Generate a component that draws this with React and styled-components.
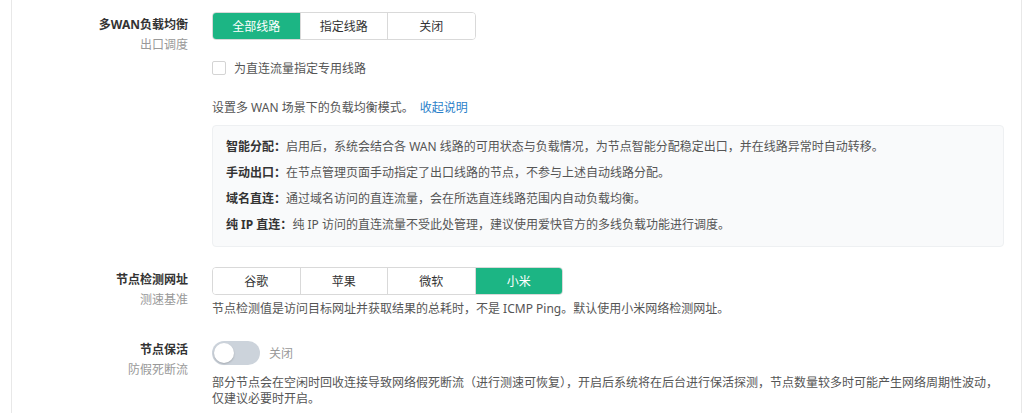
import styled, { createGlobalStyle } from 'styled-components';

const GlobalStyle = createGlobalStyle`
  html, body {
    margin: 0;
    background: #fff;
    font-family: "Noto Sans", "Noto Sans CJK SC", sans-serif;
    font-size: 12px;
    color: #333;
  }
`;

const Card = styled.div`
  margin-left: 11px;
  width: 1009px;
  min-height: 413px;
  border-left: 1px solid #e8e8e8;
  border-right: 1px solid #e8e8e8;
  padding-top: 12px;
  display: flex;
  flex-direction: column;
  gap: 20px;
`;

const Row = styled.div`
  display: grid;
  grid-template-columns: 176px 796px;
  column-gap: 24px;
`;

const Label = styled.div`
  text-align: right;
  padding-top: ${(p) => p.$offset ?? 4}px;
  display: flex;
  flex-direction: column;
  gap: 2px;
`;

const Title = styled.div`
  font-weight: 700;
  line-height: 18px;
  color: #333;
`;

const Sub = styled.div`
  line-height: 18px;
  color: #999;
`;

const Control = styled.div`
  display: flex;
  flex-direction: column;
  align-items: flex-start;
`;

const Segmented = styled.div`
  display: flex;
  border: 1px solid #d9d9d9;
  border-radius: 4px;
  overflow: hidden;
  height: 26px;
`;

const Segment = styled.div`
  width: 86.5px;
  display: flex;
  align-items: center;
  justify-content: center;
  color: ${(p) => (p.$active ? '#fff' : '#333')};
  background: ${(p) => (p.$active ? '#1cb584' : '#fff')};
  & + & {
    border-left: 1px solid ${(p) => (p.$active ? '#1cb584' : '#d9d9d9')};
  }
`;

const CheckRow = styled.label`
  margin-top: 18px;
  display: flex;
  align-items: center;
  gap: 8px;
  height: 20px;
  color: #555;
`;

const Box = styled.span`
  width: 12px;
  height: 12px;
  border: 1px solid #d4d4d4;
  border-radius: 2px;
  background: #fff;
`;

const Desc = styled.div`
  margin-top: ${(p) => p.$top ?? 4}px;
  line-height: ${(p) => p.$lh ?? 20}px;
  color: #555;
`;

const Link = styled.a`
  margin-left: 6px;
  color: #2b7fc9;
  text-decoration: none;
  cursor: pointer;
`;

const InfoBox = styled.div`
  margin-top: 7px;
  width: 764px;
  padding: 8px 13px;
  background: #f9fafb;
  border: 1px solid #eef0f2;
  border-radius: 4px;
`;

const InfoLine = styled.div`
  line-height: 26px;
  color: #555;
  b {
    color: #333;
    font-weight: 700;
  }
`;

const SwitchRow = styled.div`
  height: 28px;
  display: flex;
  align-items: center;
  gap: 9px;
  color: #999;
`;

const Track = styled.div`
  position: relative;
  width: 48px;
  height: 24px;
  border-radius: 12px;
  background: ${(p) => (p.$on ? '#1cb584' : '#ccd3db')};
`;

const Knob = styled.span`
  position: absolute;
  top: 2px;
  left: ${(p) => (p.$on ? 26 : 2)}px;
  width: 20px;
  height: 20px;
  border-radius: 50%;
  background: #fff;
  box-shadow: 0 1px 2px rgba(0, 0, 0, 0.2);
`;

const wanModes = ['全部线路', '指定线路', '关闭'];
const probes = ['谷歌', '苹果', '微软', '小米'];

const notes = [
  ['智能分配：', '启用后，系统会结合各 WAN 线路的可用状态与负载情况，为节点智能分配稳定出口，并在线路异常时自动转移。'],
  ['手动出口：', '在节点管理页面手动指定了出口线路的节点，不参与上述自动线路分配。'],
  ['域名直连：', '通过域名访问的直连流量，会在所选直连线路范围内自动负载均衡。'],
  ['纯 IP 直连：', '纯 IP 访问的直连流量不受此处管理，建议使用爱快官方的多线负载功能进行调度。'],
];

export default function App() {
  return (
    <>
      <GlobalStyle />
      <Card>
        <Row>
          <Label>
            <Title>多WAN负载均衡</Title>
            <Sub>出口调度</Sub>
          </Label>
          <Control>
            <Segmented>
              {wanModes.map((m, i) => (
                <Segment key={m} $active={i === 0}>{m}</Segment>
              ))}
            </Segmented>
            <CheckRow>
              <Box />
              为直连流量指定专用线路
            </CheckRow>
            <Desc $top={20}>
              设置多 WAN 场景下的负载均衡模式。<Link>收起说明</Link>
            </Desc>
            <InfoBox>
              {notes.map(([k, v]) => (
                <InfoLine key={k}>
                  <b>{k}</b>
                  {v}
                </InfoLine>
              ))}
            </InfoBox>
          </Control>
        </Row>

        <Row>
          <Label>
            <Title>节点检测网址</Title>
            <Sub>测速基准</Sub>
          </Label>
          <Control>
            <Segmented>
              {probes.map((m, i) => (
                <Segment key={m} $active={i === 3}>{m}</Segment>
              ))}
            </Segmented>
            <Desc>节点检测值是访问目标网址并获取结果的总耗时，不是 ICMP Ping。默认使用小米网络检测网址。</Desc>
          </Control>
        </Row>

        <Row>
          <Label $offset={2}>
            <Title>节点保活</Title>
            <Sub>防假死断流</Sub>
          </Label>
          <Control>
            <SwitchRow>
              <Track>
                <Knob />
              </Track>
              关闭
            </SwitchRow>
            <Desc $top={8} $lh={16}>
              部分节点会在空闲时回收连接导致网络假死断流（进行测速可恢复），开启后系统将在后台进行保活探测，节点数量较多时可能产生网络周期性波动，仅建议必要时开启。
            </Desc>
          </Control>
        </Row>
      </Card>
    </>
  );
}
